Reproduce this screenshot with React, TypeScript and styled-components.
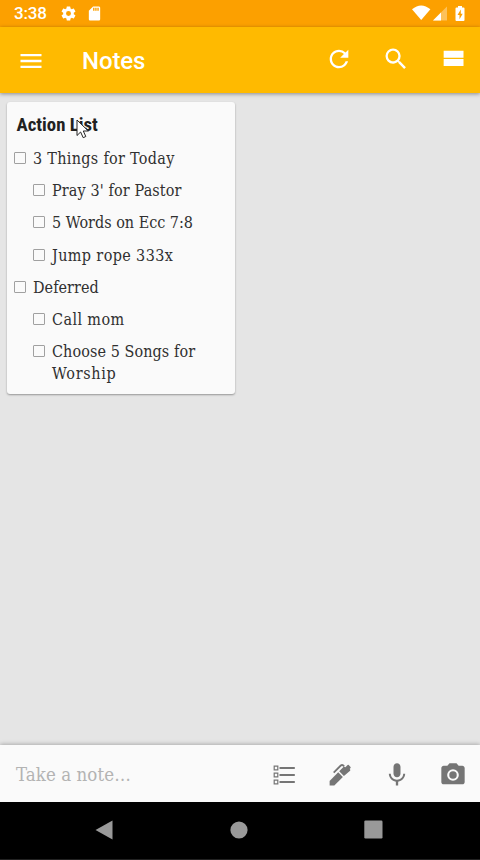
import React from "react";
import styled, { createGlobalStyle } from "styled-components";

const GlobalStyle = createGlobalStyle`
  * { box-sizing: border-box; }
  body { margin: 0; background: #e5e5e5; }
`;

const slab = `"Roboto Slab", "DejaVu Serif Condensed", "DejaVu Serif", serif`;

const Screen = styled.div`
  width: 480px;
  height: 860px;
  display: flex;
  flex-direction: column;
  overflow: hidden;
  background: #e5e5e5;
  font-family: Roboto, sans-serif;
`;

const StatusBar = styled.div`
  height: 27px;
  flex: none;
  display: flex;
  align-items: center;
  background: #fca000;
  color: #fff;
  padding: 0 12px 0 14px;
`;

const Clock = styled.span`
  width: 45.5px;
  font-size: 17px;
  line-height: 27px;
  font-weight: 500;
  letter-spacing: -0.15px;
`;

const StatusIcons = styled.div`
  display: flex;
  align-items: center;
  gap: 9px;
`;

const SignalIcons = styled.div`
  display: flex;
  align-items: center;
  margin-left: auto;
`;

const Header = styled.header`
  height: 66px;
  flex: none;
  z-index: 1;
  display: flex;
  align-items: center;
  padding: 0 13px 0 17px;
  background: #ffba00;
  box-shadow: 0 1px 4px rgba(0, 0, 0, 0.4);
`;

const Title = styled.h1`
  margin: 2px 0 0 37px;
  color: #fff;
  font-size: 24px;
  line-height: 28px;
  font-weight: 500;
  letter-spacing: -0.1px;
`;

const MenuButton = styled.div`
  display: flex;
  margin-top: 2px;
`;

const Actions = styled.div`
  display: flex;
  gap: 29px;
  margin: 0 0 2px auto;
`;

const Main = styled.main`
  flex: 1;
  padding: 9px 7px;
`;

const Card = styled.article`
  width: 228px;
  height: 292px;
  padding: 12px 7px 0;
  background: #fafafa;
  border-radius: 3px;
  box-shadow: 0 1px 2px rgba(0, 0, 0, 0.35);
`;

const CardTitle = styled.h2`
  position: relative;
  width: max-content;
  margin: 0 0 12px 2.5px;
  color: #212121;
  font-size: 18.8px;
  line-height: 22px;
  font-weight: 700;
  font-stretch: 75%;
`;

const Pointer = styled.svg`
  position: absolute;
  left: 59px;
  top: 5px;
`;

const List = styled.ul`
  margin: 0;
  padding: 0;
  list-style: none;
`;

const Item = styled.li<{ $nested?: boolean }>`
  display: flex;
  gap: 7px;
  margin-bottom: 10.2px;
  padding-left: ${(p) => (p.$nested ? 19 : 0)}px;
`;

const Box = styled.span`
  flex: none;
  width: 12px;
  height: 12px;
  margin-top: 4px;
  border: 1px solid #a0a0a0;
  border-radius: 1px;
`;

const ItemText = styled.div`
  color: #303030;
  font-family: ${slab};
  font-stretch: condensed;
  font-size: 16px;
  line-height: 22px;
`;

const Line = styled.div<{ $spacing: number }>`
  letter-spacing: ${(p) => p.$spacing}px;
  white-space: nowrap;
`;

const Composer = styled.footer`
  height: 57px;
  flex: none;
  display: flex;
  align-items: center;
  padding: 0 13px 0 16px;
  background: #fafafa;
  box-shadow: 0 -1px 4px rgba(0, 0, 0, 0.25);
`;

const Placeholder = styled.span`
  margin-top: 2px;
  color: #b3b3b3;
  font-family: ${slab};
  font-stretch: condensed;
  font-size: 18.5px;
  line-height: 26px;
  letter-spacing: 0.08px;
`;

const Tools = styled.div`
  display: flex;
  gap: 28.5px;
  margin-left: auto;
  padding-top: 2px;
`;

const NavBar = styled.nav`
  height: 58px;
  flex: none;
  display: flex;
  align-items: center;
  justify-content: space-between;
  padding: 0 97px 2px 94px;
  background: #000;
  border-bottom: 1px solid #222;
`;

const Icon = ({ d, size = 28, color = "#fff" }: { d: string; size?: number; color?: string }) => (
  <svg width={size} height={size} viewBox="0 0 24 24" fill={color}>
    <path d={d} fillRule="evenodd" />
  </svg>
);

const paths = {
  gear: "M19.43 12.98c.04-.32.07-.64.07-.98s-.03-.66-.07-.98l2.11-1.65c.19-.15.24-.42.12-.64l-2-3.46c-.12-.22-.39-.3-.61-.22l-2.49 1c-.52-.4-1.08-.73-1.69-.98l-.38-2.65A.49.49 0 0 0 14 2h-4c-.25 0-.46.18-.49.42l-.38 2.65c-.61.25-1.17.59-1.69.98l-2.49-1c-.23-.09-.49 0-.61.22l-2 3.46c-.13.22-.07.49.12.64l2.11 1.65c-.04.32-.07.65-.07.98s.03.66.07.98l-2.11 1.65c-.19.15-.24.42-.12.64l2 3.46c.12.22.39.3.61.22l2.49-1c.52.4 1.08.73 1.69.98l.38 2.65c.03.24.24.42.49.42h4c.25 0 .46-.18.49-.42l.38-2.65c.61-.25 1.17-.59 1.69-.98l2.49 1c.23.09.49 0 .61-.22l2-3.46c.12-.22.07-.49-.12-.64l-2.11-1.65zM12 15.5a3.5 3.5 0 1 1 0-7 3.5 3.5 0 0 1 0 7z",
  sd: "M18 2h-8L4.02 8 4 20c0 1.1.9 2 2 2h12c1.1 0 2-.9 2-2V4c0-1.1-.9-2-2-2zm-6 6h-2V4h2v4zm3 0h-2V4h2v4zm3 0h-2V4h2v4z",
  menu: "M3 18h18v-2H3v2zm0-5h18v-2H3v2zm0-7v2h18V6H3z",
  refresh: "M17.65 6.35A7.958 7.958 0 0 0 12 4c-4.42 0-7.99 3.58-7.99 8s3.57 8 7.99 8c3.73 0 6.84-2.55 7.73-6h-2.08A5.99 5.99 0 0 1 12 18c-3.31 0-6-2.69-6-6s2.69-6 6-6c1.66 0 3.14.69 4.22 1.78L13 11h7V4l-2.35 2.35z",
  search: "M15.5 14h-.79l-.28-.27A6.471 6.471 0 0 0 16 9.5 6.5 6.5 0 1 0 9.5 16c1.61 0 3.09-.59 4.23-1.57l.27.28v.79l5 4.99L20.49 19l-4.99-5zm-6 0C7.01 14 5 11.99 5 9.5S7.01 5 9.5 5 14 7.01 14 9.5 11.99 14 9.5 14z",
  stream: "M4 18h17v-6H4v6zM4 5v6h17V5z",
  mic: "M12 14c1.66 0 2.99-1.34 2.99-3L15 5c0-1.66-1.34-3-3-3S9 3.34 9 5v6c0 1.66 1.34 3 3 3zm5.3-3c0 3-2.54 5.1-5.3 5.1S6.7 14 6.7 11H5c0 3.41 2.72 6.23 6 6.72V21h2v-3.28c3.28-.48 6-3.3 6-6.72h-1.7z",
  camera: "M9 2 7.17 4H4c-1.1 0-2 .9-2 2v12c0 1.1.9 2 2 2h16c1.1 0 2-.9 2-2V6c0-1.1-.9-2-2-2h-3.17L15 2H9zm3 15a5 5 0 1 1 0-10 5 5 0 0 1 0 10zm0-1.8a3.2 3.2 0 1 0 0-6.4 3.2 3.2 0 0 0 0 6.4z",
};

type Note = { nested?: boolean; lines: { text: string; spacing: number }[] };

const items: Note[] = [
  { lines: [{ text: "3 Things for Today", spacing: 0.31 }] },
  { nested: true, lines: [{ text: "Pray 3' for Pastor", spacing: 0.13 }] },
  { nested: true, lines: [{ text: "5 Words on Ecc 7:8", spacing: 0 }] },
  { nested: true, lines: [{ text: "Jump rope 333x", spacing: 0.38 }] },
  { lines: [{ text: "Deferred", spacing: 0.04 }] },
  { nested: true, lines: [{ text: "Call mom", spacing: 0.4 }] },
  {
    nested: true,
    lines: [
      { text: "Choose 5 Songs for", spacing: 0.08 },
      { text: "Worship", spacing: 0.65 },
    ],
  },
];

const gray = "#757575";

export default function App() {
  return (
    <Screen>
      <GlobalStyle />
      <StatusBar>
        <Clock>3:38</Clock>
        <StatusIcons>
          <Icon d={paths.gear} size={17} />
          <Icon d={paths.sd} size={17} />
        </StatusIcons>
        <SignalIcons>
          <svg width="56" height="18" viewBox="0 0 56 18">
            <path d="M0 4.200Q9.200-3.400 18.400 4.200L9.200 15z" fill="#fff" />
            <path d="M21 15.500 35 1.500v14z" fill="#fff" opacity=".35" />
            <path d="M21 15.500 29 7.500v8z" fill="#fff" />
            <path
              d="M46 1h4v1.500h1.500q1 0 1 1V15q0 1-1 1h-7q-1 0-1-1V3.500q0-1 1-1H46z M48.800 4.500 45.500 10h2v4.200L50.700 8.700h-1.900z"
              fill="#fff"
              fillRule="evenodd"
            />
          </svg>
        </SignalIcons>
      </StatusBar>
      <Header>
        <MenuButton>
          <Icon d={paths.menu} />
        </MenuButton>
        <Title>Notes</Title>
        <Actions>
          <Icon d={paths.refresh} />
          <Icon d={paths.search} />
          <Icon d={paths.stream} />
        </Actions>
      </Header>
      <Main>
        <Card>
          <CardTitle>
            Action List
            <Pointer width="14" height="20" viewBox="0 0 14 20">
              <path
                d="M1 1v15.500l3.600-3.500 2.600 5.700 2.600-1.200L7.300 12h5z"
                fill="#fff"
                stroke="#222"
                strokeWidth="1"
              />
            </Pointer>
          </CardTitle>
          <List>
            {items.map((item) => (
              <Item key={item.lines[0].text} $nested={item.nested}>
                <Box />
                <ItemText>
                  {item.lines.map((line) => (
                    <Line key={line.text} $spacing={line.spacing}>
                      {line.text}
                    </Line>
                  ))}
                </ItemText>
              </Item>
            ))}
          </List>
        </Card>
      </Main>
      <Composer>
        <Placeholder>Take a note…</Placeholder>
        <Tools>
          <svg width="28" height="28" viewBox="0 0 28 28" fill="none" stroke={gray}>
            <path d="M4.200 5.200h3.600v3.600H4.200zM4.200 12.200h3.600v3.600H4.200zM4.200 19.200h3.600v3.600H4.200z" strokeWidth="1.200" />
            <path d="M9.500 7h15.300M9.500 14h15.300M9.500 21h15.300" strokeWidth="2" />
          </svg>
          <svg width="28" height="28" viewBox="0 0 28 28" fill={gray}>
            <path d="M3.600 24.600v-4.700L12.200 11.300l4.700 4.700L8.300 24.600z" />
            <path d="M13.200 10.300 17.900 5.600l1.500.6 2.200-2.200q.6-.5 1.200 0l1.700 1.900q.5.600 0 1.200l-.8 1 .4.500q.5.600 0 1.200L17.900 15z" />
            <path d="M7.700 11.600 14.800 4.500q1.200-1.100 2.500 0l.8.800" fill="none" stroke={gray} strokeWidth="1.800" />
          </svg>
          <Icon d={paths.mic} color={gray} />
          <Icon d={paths.camera} color={gray} />
        </Tools>
      </Composer>
      <NavBar>
        <svg width="19" height="20" viewBox="0 0 19 20">
          <path d="M1.500 10 18.500 0.500v19z" fill="#999" />
        </svg>
        <svg width="18" height="18" viewBox="0 0 18 18">
          <circle cx="9" cy="9" r="8.600" fill="#999" />
        </svg>
        <svg width="19" height="19" viewBox="0 0 19 19">
          <rect x=".3" y=".5" width="18.200" height="18" rx="1.200" fill="#999" />
        </svg>
      </NavBar>
    </Screen>
  );
}
